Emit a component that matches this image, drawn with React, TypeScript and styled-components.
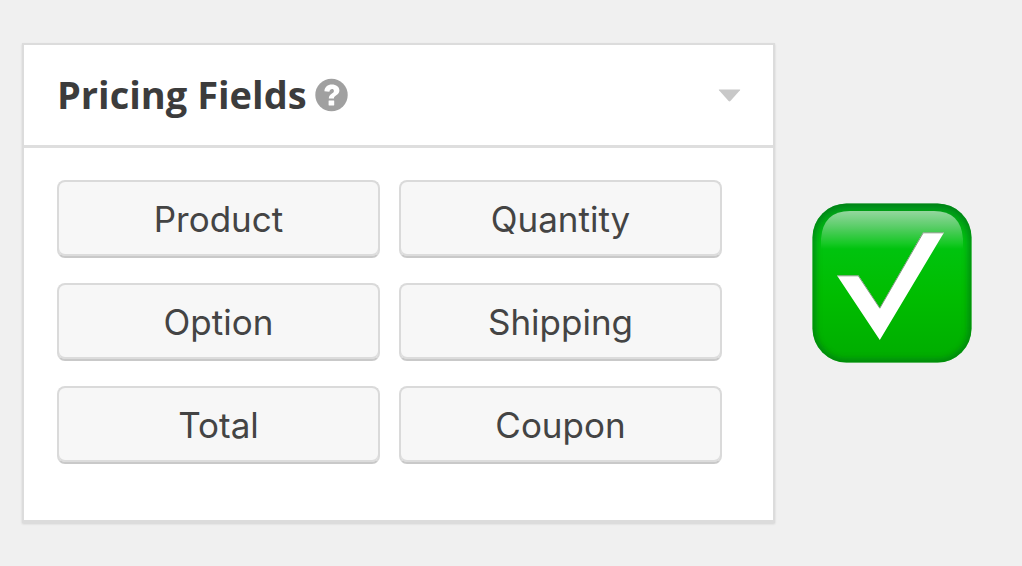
import React from 'react';
import styled, { createGlobalStyle } from 'styled-components';

const GlobalStyle = createGlobalStyle`
  * {
    box-sizing: border-box;
  }
  body {
    margin: 0;
    background: #f0f0f0;
    color: #3c3c3c;
    font-family: Inter, 'Liberation Sans', sans-serif;
  }
`;

const Page = styled.main`
  display: flex;
  align-items: center;
  gap: 37px;
  min-height: 100vh;
  padding: 43px 50px 44px 22px;
`;

const Panel = styled.section`
  flex: 1;
  min-width: 0;
  background: #fff;
  border: 2px solid #dcdcdc;
  border-bottom-width: 3px;
  box-shadow: 0 1px 2px rgba(0, 0, 0, 0.12);
`;

const PanelHeader = styled.header`
  display: flex;
  align-items: center;
  justify-content: space-between;
  height: 103px;
  padding: 0 32px 0 33px;
  border-bottom: 3px solid #dedede;
`;

const TitleGroup = styled.div`
  display: flex;
  align-items: center;
  gap: 8px;
`;

const Title = styled.h2`
  margin: 0;
  padding-bottom: 2px;
  font: 700 38px/52px 'Open Sans', 'Noto Sans', sans-serif;
`;

const IconButton = styled.button`
  display: flex;
  padding: 0;
  border: 0;
  background: none;
  cursor: pointer;
`;

const FieldGrid = styled.div`
  display: grid;
  grid-template-columns: 1fr 1fr;
  gap: 25px 19px;
  padding: 32px 51px 56px 33px;
`;

const FieldButton = styled.button`
  height: 78px;
  padding: 0 8px 1px;
  border: 2px solid #dadada;
  border-bottom-color: #c9c9c9;
  border-radius: 8px;
  background: #f7f7f7;
  box-shadow: inset 0 -2px 0 #dcdcdc;
  color: #444;
  font: 400 35px/44px Inter, 'Liberation Sans', sans-serif;
  cursor: pointer;
`;

const Badge = styled.svg`
  flex: none;
  width: 160px;
  height: 160px;
`;

const fields = ['Product', 'Quantity', 'Option', 'Shipping', 'Total', 'Coupon'];

function HelpIcon() {
  return (
    <svg width="33" height="34" viewBox="0 0 33 34" aria-hidden="true">
      <circle cx="16.5" cy="17" r="16.2" fill="#a0a0a0" />
      <path
        d="M9.4 13.2C9.8 9 12.6 6.6 16.8 6.6C21.4 6.6 24.4 9 24.4 12.6C24.4 17.4 18.9 17.4 18.9 20.4H13.8C13.8 15.6 18.9 15.6 18.9 12.9C18.9 10.4 14.8 10.4 14.4 13.7Z"
        fill="#fff"
      />
      <rect x="13.6" y="22.4" width="5.6" height="5" rx="0.4" fill="#fff" />
    </svg>
  );
}

function CaretIcon() {
  return (
    <svg width="23" height="13" viewBox="0 0 23 13" aria-hidden="true">
      <path d="M1.2 .5H21.8Q22.6 .6 22 1.3L12.4 12Q11.5 12.9 10.6 12L1 1.3Q.4 .6 1.2 .5Z" fill="#c8c8c8" />
    </svg>
  );
}

function CheckBadge() {
  return (
    <Badge viewBox="0 0 160 160" role="img" aria-label="Available">
      <defs>
        <linearGradient id="face" x1="0" y1="0" x2="0" y2="1">
          <stop offset="0" stopColor="#009a1c" />
          <stop offset=".25" stopColor="#00c410" />
          <stop offset=".58" stopColor="#00bd00" />
          <stop offset="1" stopColor="#00ac00" />
        </linearGradient>
        <linearGradient id="gloss" x1="0" y1="0" x2="0" y2="1">
          <stop offset="0" stopColor="#fff" stopOpacity=".58" />
          <stop offset=".4" stopColor="#fff" stopOpacity=".36" />
          <stop offset="1" stopColor="#fff" stopOpacity="0" />
        </linearGradient>
        <clipPath id="outline">
          <rect x=".5" y=".5" width="159" height="159" rx="34" />
        </clipPath>
        <filter id="soften" x="-10%" y="-10%" width="120%" height="120%">
          <feGaussianBlur stdDeviation="3" />
        </filter>
      </defs>
      <g clipPath="url(#outline)">
        <rect width="160" height="160" fill="url(#face)" />
        <rect
          width="160"
          height="160"
          rx="34"
          fill="none"
          stroke="#007218"
          strokeWidth="7"
          opacity=".75"
          filter="url(#soften)"
        />
        <path d="M9 46V36Q11 8 38 8H122Q149 8 151 36V46Z" fill="url(#gloss)" />
      </g>
      <path d="M25 72.5H46.5L67.8 105L111 29.5H132L67.8 137Z" fill="#fff" />
      <path d="M25.5 72.8H46.3L67.8 105.2L111.2 29.8H131.5" fill="none" stroke="#7d9a7d" strokeWidth="1" />
    </Badge>
  );
}

export default function App() {
  return (
    <>
      <GlobalStyle />
      <Page>
        <Panel aria-labelledby="pricing-title">
          <PanelHeader>
            <TitleGroup>
              <Title id="pricing-title">Pricing Fields</Title>
              <IconButton type="button" aria-label="Help with pricing fields">
                <HelpIcon />
              </IconButton>
            </TitleGroup>
            <IconButton type="button" aria-label="Collapse pricing fields" aria-expanded="true">
              <CaretIcon />
            </IconButton>
          </PanelHeader>
          <FieldGrid>
            {fields.map((field) => (
              <FieldButton type="button" key={field}>
                {field}
              </FieldButton>
            ))}
          </FieldGrid>
        </Panel>
        <CheckBadge />
      </Page>
    </>
  );
}
